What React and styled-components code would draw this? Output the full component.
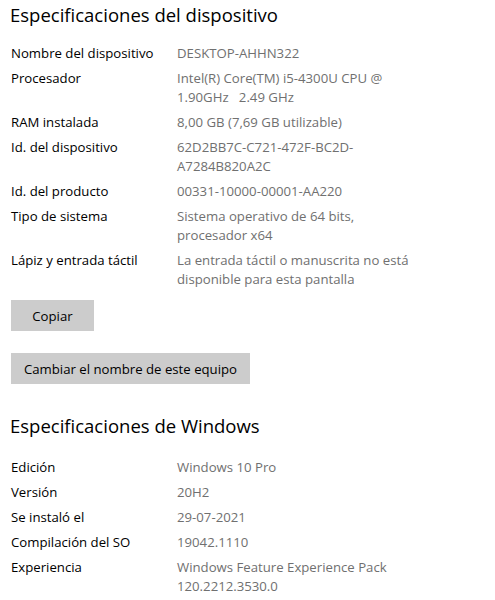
import React from "react";
import styled, { createGlobalStyle } from "styled-components";

const Global = createGlobalStyle`
  html, body { margin: 0; padding: 0; background: #ffffff; }
  body { font-family: "Open Sans", "Noto Sans", sans-serif; }
`;

const Page = styled.div`
  padding: 0 0 0 11px;
  width: 484px;
  color: #000;
`;

const Title = styled.h2`
  margin: ${(p) => p.$top || 0}px 0 0 -1px;
  font-size: 18.5px;
  font-weight: 400;
  line-height: 28px;
  padding-top: 1px;
  color: #000;
`;

const Specs = styled.dl`
  margin: ${(p) => p.$top}px 0 0 0;
  display: grid;
  grid-template-columns: 166px 1fr;
  row-gap: 6px;
  font-size: 13.2px;
  line-height: 19px;
`;

const Label = styled.dt`
  margin: 0;
  color: #000;
`;

const Value = styled.dd`
  margin: 0;
  color: #707070;
  white-space: pre-wrap;
`;

const Button = styled.button`
  display: block;
  margin: ${(p) => p.$top}px 0 0 0;
  height: 31px;
  width: ${(p) => p.$w}px;
  border: none;
  background: #cccccc;
  color: #000;
  font-family: inherit;
  font-size: 13.2px;
  padding: 0;
  cursor: default;
`;

const device = [
  ["Nombre del dispositivo", "DESKTOP-AHHN322"],
  ["Procesador", "Intel(R) Core(TM) i5-4300U CPU @\n1.90GHz   2.49 GHz"],
  ["RAM instalada", "8,00 GB (7,69 GB utilizable)"],
  ["Id. del dispositivo", "62D2BB7C-C721-472F-BC2D-\nA7284B820A2C"],
  ["Id. del producto", "00331-10000-00001-AA220"],
  ["Tipo de sistema", "Sistema operativo de 64 bits,\nprocesador x64"],
  ["Lápiz y entrada táctil", "La entrada táctil o manuscrita no está\ndisponible para esta pantalla"],
];

const windows = [
  ["Edición", "Windows 10 Pro"],
  ["Versión", "20H2"],
  ["Se instaló el", "29-07-2021"],
  ["Compilación del SO", "19042.1110"],
  ["Experiencia", "Windows Feature Experience Pack\n120.2212.3530.0"],
];

function SpecList({ items, top }) {
  return (
    <Specs $top={top}>
      {items.map(([k, v]) => (
        <React.Fragment key={k}>
          <Label>{k}</Label>
          <Value>{v}</Value>
        </React.Fragment>
      ))}
    </Specs>
  );
}

export default function App() {
  return (
    <Page>
      <Global />
      <Title>Especificaciones del dispositivo</Title>
      <SpecList items={device} top={15} />
      <Button $top={11} $w={83}>Copiar</Button>
      <Button $top={22} $w={239}>Cambiar el nombre de este equipo</Button>
      <Title $top={27}>Especificaciones de Windows</Title>
      <SpecList items={windows} top={18} />
    </Page>
  );
}
